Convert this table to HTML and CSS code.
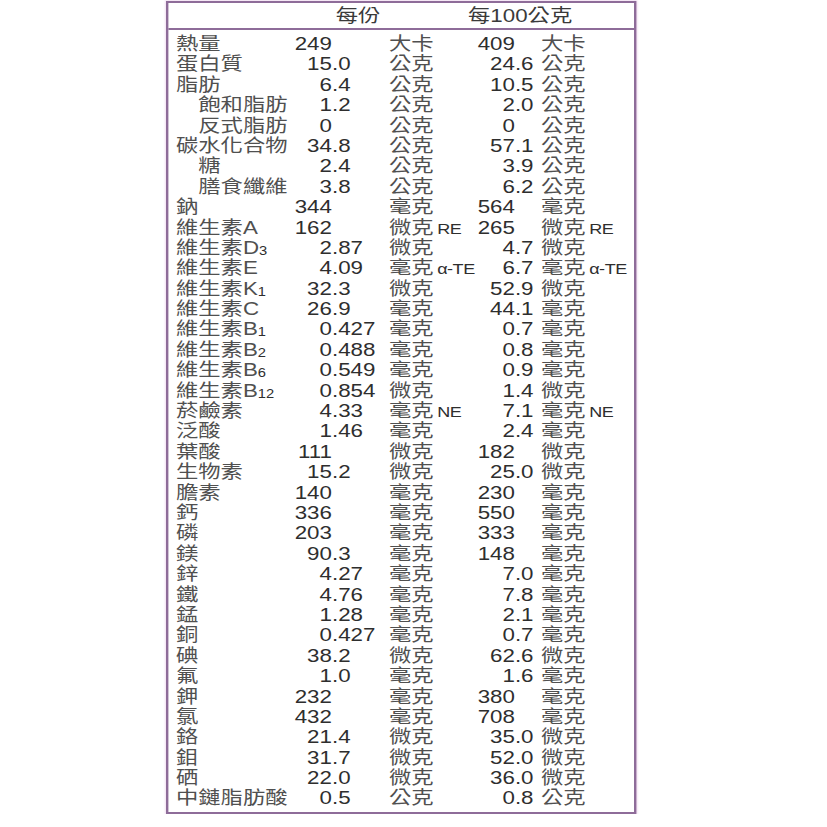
FILE: index.html
```html
<!DOCTYPE html>
<html lang="zh-Hant">
<head>
<meta charset="utf-8">
<title>營養標示</title>
<link rel="stylesheet" href="styles.css">
</head>
<body>
<div class="panel">
  <div class="head">
    <span class="h1">每份</span>
    <span class="h2">每100公克</span>
  </div>
  <div class="rows">
    <div class="row"><span class="lab">熱量</span><span class="int">249</span><span class="frac"></span><span class="unit">大卡</span><span class="int">409</span><span class="frac"></span><span class="unit">大卡</span></div>
    <div class="row"><span class="lab">蛋白質</span><span class="int">15</span><span class="frac">.0</span><span class="unit">公克</span><span class="int">24</span><span class="frac">.6</span><span class="unit">公克</span></div>
    <div class="row"><span class="lab">脂肪</span><span class="int">6</span><span class="frac">.4</span><span class="unit">公克</span><span class="int">10</span><span class="frac">.5</span><span class="unit">公克</span></div>
    <div class="row"><span class="lab ind">飽和脂肪</span><span class="int">1</span><span class="frac">.2</span><span class="unit">公克</span><span class="int">2</span><span class="frac">.0</span><span class="unit">公克</span></div>
    <div class="row"><span class="lab ind">反式脂肪</span><span class="int">0</span><span class="frac"></span><span class="unit">公克</span><span class="int">0</span><span class="frac"></span><span class="unit">公克</span></div>
    <div class="row"><span class="lab">碳水化合物</span><span class="int">34</span><span class="frac">.8</span><span class="unit">公克</span><span class="int">57</span><span class="frac">.1</span><span class="unit">公克</span></div>
    <div class="row"><span class="lab ind">糖</span><span class="int">2</span><span class="frac">.4</span><span class="unit">公克</span><span class="int">3</span><span class="frac">.9</span><span class="unit">公克</span></div>
    <div class="row"><span class="lab ind">膳食纖維</span><span class="int">3</span><span class="frac">.8</span><span class="unit">公克</span><span class="int">6</span><span class="frac">.2</span><span class="unit">公克</span></div>
    <div class="row"><span class="lab">鈉</span><span class="int">344</span><span class="frac"></span><span class="unit">毫克</span><span class="int">564</span><span class="frac"></span><span class="unit">毫克</span></div>
    <div class="row"><span class="lab">維生素A</span><span class="int">162</span><span class="frac"></span><span class="unit">微克<span class="sfx">RE</span></span><span class="int">265</span><span class="frac"></span><span class="unit">微克<span class="sfx">RE</span></span></div>
    <div class="row"><span class="lab">維生素D<span class="sub">3</span></span><span class="int">2</span><span class="frac">.87</span><span class="unit">微克</span><span class="int">4</span><span class="frac">.7</span><span class="unit">微克</span></div>
    <div class="row"><span class="lab">維生素E</span><span class="int">4</span><span class="frac">.09</span><span class="unit">毫克<span class="sfx">α-TE</span></span><span class="int">6</span><span class="frac">.7</span><span class="unit">毫克<span class="sfx">α-TE</span></span></div>
    <div class="row"><span class="lab">維生素K<span class="sub">1</span></span><span class="int">32</span><span class="frac">.3</span><span class="unit">微克</span><span class="int">52</span><span class="frac">.9</span><span class="unit">微克</span></div>
    <div class="row"><span class="lab">維生素C</span><span class="int">26</span><span class="frac">.9</span><span class="unit">毫克</span><span class="int">44</span><span class="frac">.1</span><span class="unit">毫克</span></div>
    <div class="row"><span class="lab">維生素B<span class="sub">1</span></span><span class="int">0</span><span class="frac">.427</span><span class="unit">毫克</span><span class="int">0</span><span class="frac">.7</span><span class="unit">毫克</span></div>
    <div class="row"><span class="lab">維生素B<span class="sub">2</span></span><span class="int">0</span><span class="frac">.488</span><span class="unit">毫克</span><span class="int">0</span><span class="frac">.8</span><span class="unit">毫克</span></div>
    <div class="row"><span class="lab">維生素B<span class="sub">6</span></span><span class="int">0</span><span class="frac">.549</span><span class="unit">毫克</span><span class="int">0</span><span class="frac">.9</span><span class="unit">毫克</span></div>
    <div class="row"><span class="lab">維生素B<span class="sub">12</span></span><span class="int">0</span><span class="frac">.854</span><span class="unit">微克</span><span class="int">1</span><span class="frac">.4</span><span class="unit">微克</span></div>
    <div class="row"><span class="lab">菸鹼素</span><span class="int">4</span><span class="frac">.33</span><span class="unit">毫克<span class="sfx">NE</span></span><span class="int">7</span><span class="frac">.1</span><span class="unit">毫克<span class="sfx">NE</span></span></div>
    <div class="row"><span class="lab">泛酸</span><span class="int">1</span><span class="frac">.46</span><span class="unit">毫克</span><span class="int">2</span><span class="frac">.4</span><span class="unit">毫克</span></div>
    <div class="row"><span class="lab">葉酸</span><span class="int">111</span><span class="frac"></span><span class="unit">微克</span><span class="int">182</span><span class="frac"></span><span class="unit">微克</span></div>
    <div class="row"><span class="lab">生物素</span><span class="int">15</span><span class="frac">.2</span><span class="unit">微克</span><span class="int">25</span><span class="frac">.0</span><span class="unit">微克</span></div>
    <div class="row"><span class="lab">膽素</span><span class="int">140</span><span class="frac"></span><span class="unit">毫克</span><span class="int">230</span><span class="frac"></span><span class="unit">毫克</span></div>
    <div class="row"><span class="lab">鈣</span><span class="int">336</span><span class="frac"></span><span class="unit">毫克</span><span class="int">550</span><span class="frac"></span><span class="unit">毫克</span></div>
    <div class="row"><span class="lab">磷</span><span class="int">203</span><span class="frac"></span><span class="unit">毫克</span><span class="int">333</span><span class="frac"></span><span class="unit">毫克</span></div>
    <div class="row"><span class="lab">鎂</span><span class="int">90</span><span class="frac">.3</span><span class="unit">毫克</span><span class="int">148</span><span class="frac"></span><span class="unit">毫克</span></div>
    <div class="row"><span class="lab">鋅</span><span class="int">4</span><span class="frac">.27</span><span class="unit">毫克</span><span class="int">7</span><span class="frac">.0</span><span class="unit">毫克</span></div>
    <div class="row"><span class="lab">鐵</span><span class="int">4</span><span class="frac">.76</span><span class="unit">毫克</span><span class="int">7</span><span class="frac">.8</span><span class="unit">毫克</span></div>
    <div class="row"><span class="lab">錳</span><span class="int">1</span><span class="frac">.28</span><span class="unit">毫克</span><span class="int">2</span><span class="frac">.1</span><span class="unit">毫克</span></div>
    <div class="row"><span class="lab">銅</span><span class="int">0</span><span class="frac">.427</span><span class="unit">毫克</span><span class="int">0</span><span class="frac">.7</span><span class="unit">毫克</span></div>
    <div class="row"><span class="lab">碘</span><span class="int">38</span><span class="frac">.2</span><span class="unit">微克</span><span class="int">62</span><span class="frac">.6</span><span class="unit">微克</span></div>
    <div class="row"><span class="lab">氟</span><span class="int">1</span><span class="frac">.0</span><span class="unit">毫克</span><span class="int">1</span><span class="frac">.6</span><span class="unit">毫克</span></div>
    <div class="row"><span class="lab">鉀</span><span class="int">232</span><span class="frac"></span><span class="unit">毫克</span><span class="int">380</span><span class="frac"></span><span class="unit">毫克</span></div>
    <div class="row"><span class="lab">氯</span><span class="int">432</span><span class="frac"></span><span class="unit">毫克</span><span class="int">708</span><span class="frac"></span><span class="unit">毫克</span></div>
    <div class="row"><span class="lab">鉻</span><span class="int">21</span><span class="frac">.4</span><span class="unit">微克</span><span class="int">35</span><span class="frac">.0</span><span class="unit">微克</span></div>
    <div class="row"><span class="lab">鉬</span><span class="int">31</span><span class="frac">.7</span><span class="unit">微克</span><span class="int">52</span><span class="frac">.0</span><span class="unit">微克</span></div>
    <div class="row"><span class="lab">硒</span><span class="int">22</span><span class="frac">.0</span><span class="unit">微克</span><span class="int">36</span><span class="frac">.0</span><span class="unit">微克</span></div>
    <div class="row"><span class="lab">中鏈脂肪酸</span><span class="int">0</span><span class="frac">.5</span><span class="unit">公克</span><span class="int">0</span><span class="frac">.8</span><span class="unit">公克</span></div>
  </div>
</div>
</body>
</html>
```
FILE: styles.css
```css
html, body {
  margin: 0;
  padding: 0;
  background: #ffffff;
}

body {
  font-family: "Liberation Sans", "Noto Sans CJK TC", sans-serif;
  font-size: 18.6px;
  color: #2e2e2e;
}

.panel {
  box-sizing: border-box;
  width: 391.7px;
  margin: 1px 0 0 166px;
  border: 2px solid #8e6c99;
  box-shadow: 0 0 2px 1px #efd9ef;
  transform: scaleX(1.2);
  transform-origin: 0 0;
}

.head {
  display: flex;
  align-items: center;
  height: 25px;
  padding-left: 139.5px;
  gap: 73px;
  border-bottom: 2px solid #8e6c99;
  color: #3a3a3a;
  line-height: 25px;
}

.rows {
  padding: 4px 0 3px 6.3px;
}

.row {
  display: grid;
  grid-template-columns: 96.7px 33.3px 47.5px 72.2px 32.8px 21.7px auto;
  height: 20.4px;
  line-height: 20.4px;
  white-space: nowrap;
}

.lab,
.unit {
  color: #505050;
}

.lab.ind {
  padding-left: 1em;
}

.int {
  text-align: right;
}

.frac {
  text-align: left;
}

.sub {
  font-size: 0.66em;
  vertical-align: -0.06em;
  color: #2e2e2e;
}

.sfx {
  margin-left: 3px;
  font-size: 15px;
  letter-spacing: -0.4px;
  color: #2e2e2e;
}
```
